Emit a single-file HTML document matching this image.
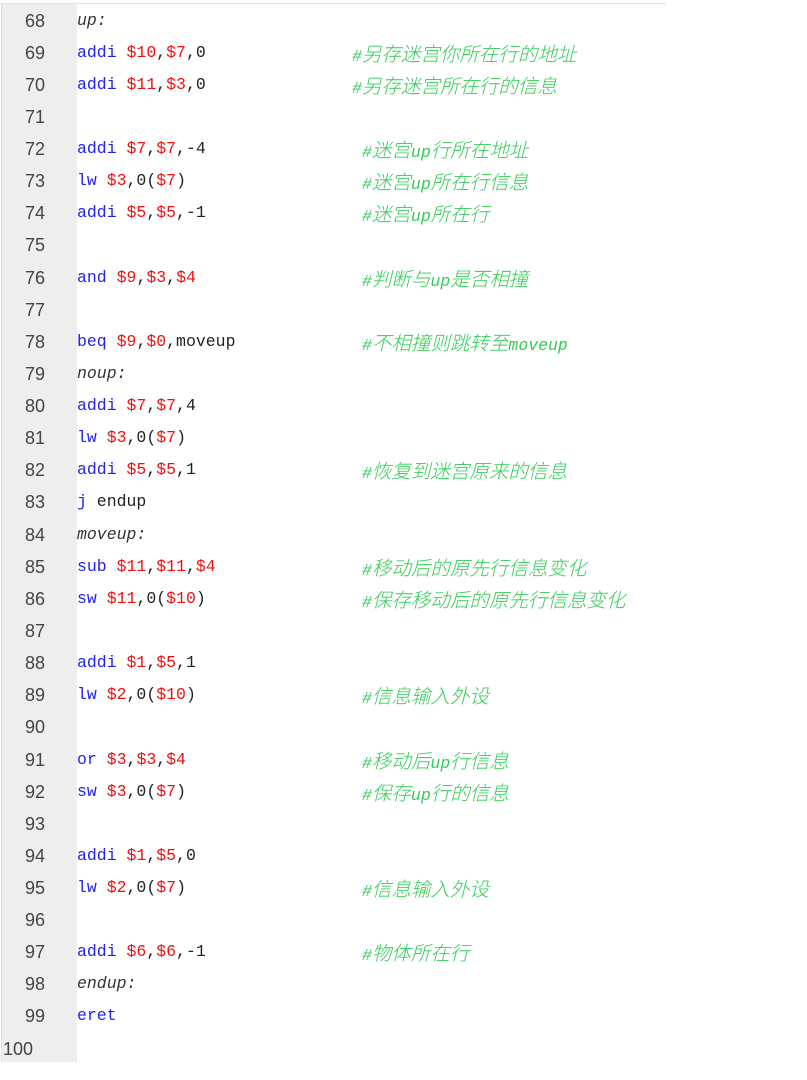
<!DOCTYPE html>
<html><head><meta charset="utf-8"><style>
body{margin:0;width:807px;height:1080px;background:#fff;position:relative;overflow:hidden}
#top{position:absolute;left:0;top:3px;width:666px;height:1px;background:#dde4ee}
#gut{position:absolute;left:1px;top:4px;width:75px;height:1058px;background:#eeeeee;border-left:1px solid #d8dde6}
.r{position:absolute;left:0;height:32px;line-height:34px;white-space:pre}
.n{position:absolute;left:0;width:45px;text-align:right;font-family:"Liberation Sans",sans-serif;font-size:18px;color:#444}
.c{position:absolute;left:77px;font-family:"Liberation Mono","Noto Sans CJK SC",monospace;font-size:16.5px;color:#222}
.k{color:#2222ee}.g{color:#ee1111}
.l{font-style:italic;color:#333}
.m{position:absolute;font-family:"Liberation Mono","Noto Sans CJK SC",monospace;font-size:16.5px;color:#33cc55;font-style:italic}
.m i{font-family:"Noto Sans CJK SC",sans-serif;font-size:19.5px;font-style:italic;font-weight:300}
</style></head><body>
<div id="top"></div><div id="gut"></div>
<div class="r" style="top:4px"><span class="n">68</span><span class="c l">up:</span></div>
<div class="r" style="top:36px"><span class="n">69</span><span class="c"><span class="k">addi</span> <span class="g">$10</span>,<span class="g">$7</span>,0</span><span class="m" style="left:352px">#<i>另存迷宫你所在行的地址</i></span></div>
<div class="r" style="top:68px"><span class="n">70</span><span class="c"><span class="k">addi</span> <span class="g">$11</span>,<span class="g">$3</span>,0</span><span class="m" style="left:352px">#<i>另存迷宫所在行的信息</i></span></div>
<div class="r" style="top:100px"><span class="n">71</span></div>
<div class="r" style="top:132px"><span class="n">72</span><span class="c"><span class="k">addi</span> <span class="g">$7</span>,<span class="g">$7</span>,-4</span><span class="m" style="left:362px">#<i>迷宫</i>up<i>行所在地址</i></span></div>
<div class="r" style="top:164px"><span class="n">73</span><span class="c"><span class="k">lw</span> <span class="g">$3</span>,0(<span class="g">$7</span>)</span><span class="m" style="left:362px">#<i>迷宫</i>up<i>所在行信息</i></span></div>
<div class="r" style="top:196px"><span class="n">74</span><span class="c"><span class="k">addi</span> <span class="g">$5</span>,<span class="g">$5</span>,-1</span><span class="m" style="left:362px">#<i>迷宫</i>up<i>所在行</i></span></div>
<div class="r" style="top:228px"><span class="n">75</span></div>
<div class="r" style="top:261px"><span class="n">76</span><span class="c"><span class="k">and</span> <span class="g">$9</span>,<span class="g">$3</span>,<span class="g">$4</span></span><span class="m" style="left:362px">#<i>判断与</i>up<i>是否相撞</i></span></div>
<div class="r" style="top:293px"><span class="n">77</span></div>
<div class="r" style="top:325px"><span class="n">78</span><span class="c"><span class="k">beq</span> <span class="g">$9</span>,<span class="g">$0</span>,moveup</span><span class="m" style="left:362px">#<i>不相撞则跳转至</i>moveup</span></div>
<div class="r" style="top:357px"><span class="n">79</span><span class="c l">noup:</span></div>
<div class="r" style="top:389px"><span class="n">80</span><span class="c"><span class="k">addi</span> <span class="g">$7</span>,<span class="g">$7</span>,4</span></div>
<div class="r" style="top:421px"><span class="n">81</span><span class="c"><span class="k">lw</span> <span class="g">$3</span>,0(<span class="g">$7</span>)</span></div>
<div class="r" style="top:453px"><span class="n">82</span><span class="c"><span class="k">addi</span> <span class="g">$5</span>,<span class="g">$5</span>,1</span><span class="m" style="left:362px">#<i>恢复到迷宫原来的信息</i></span></div>
<div class="r" style="top:485px"><span class="n">83</span><span class="c"><span class="k">j</span> endup</span></div>
<div class="r" style="top:518px"><span class="n">84</span><span class="c l">moveup:</span></div>
<div class="r" style="top:550px"><span class="n">85</span><span class="c"><span class="k">sub</span> <span class="g">$11</span>,<span class="g">$11</span>,<span class="g">$4</span></span><span class="m" style="left:362px">#<i>移动后的原先行信息变化</i></span></div>
<div class="r" style="top:582px"><span class="n">86</span><span class="c"><span class="k">sw</span> <span class="g">$11</span>,0(<span class="g">$10</span>)</span><span class="m" style="left:362px">#<i>保存移动后的原先行信息变化</i></span></div>
<div class="r" style="top:614px"><span class="n">87</span></div>
<div class="r" style="top:646px"><span class="n">88</span><span class="c"><span class="k">addi</span> <span class="g">$1</span>,<span class="g">$5</span>,1</span></div>
<div class="r" style="top:678px"><span class="n">89</span><span class="c"><span class="k">lw</span> <span class="g">$2</span>,0(<span class="g">$10</span>)</span><span class="m" style="left:362px">#<i>信息输入外设</i></span></div>
<div class="r" style="top:710px"><span class="n">90</span></div>
<div class="r" style="top:743px"><span class="n">91</span><span class="c"><span class="k">or</span> <span class="g">$3</span>,<span class="g">$3</span>,<span class="g">$4</span></span><span class="m" style="left:362px">#<i>移动后</i>up<i>行信息</i></span></div>
<div class="r" style="top:775px"><span class="n">92</span><span class="c"><span class="k">sw</span> <span class="g">$3</span>,0(<span class="g">$7</span>)</span><span class="m" style="left:362px">#<i>保存</i>up<i>行的信息</i></span></div>
<div class="r" style="top:807px"><span class="n">93</span></div>
<div class="r" style="top:839px"><span class="n">94</span><span class="c"><span class="k">addi</span> <span class="g">$1</span>,<span class="g">$5</span>,0</span></div>
<div class="r" style="top:871px"><span class="n">95</span><span class="c"><span class="k">lw</span> <span class="g">$2</span>,0(<span class="g">$7</span>)</span><span class="m" style="left:362px">#<i>信息输入外设</i></span></div>
<div class="r" style="top:903px"><span class="n">96</span></div>
<div class="r" style="top:935px"><span class="n">97</span><span class="c"><span class="k">addi</span> <span class="g">$6</span>,<span class="g">$6</span>,-1</span><span class="m" style="left:362px">#<i>物体所在行</i></span></div>
<div class="r" style="top:967px"><span class="n">98</span><span class="c l">endup:</span></div>
<div class="r" style="top:999px"><span class="n">99</span><span class="c"><span class="k">eret</span></span></div>
<div class="r" style="top:1032px"><span class="n" style="text-align:left;left:3px">100</span></div>
</body></html>
